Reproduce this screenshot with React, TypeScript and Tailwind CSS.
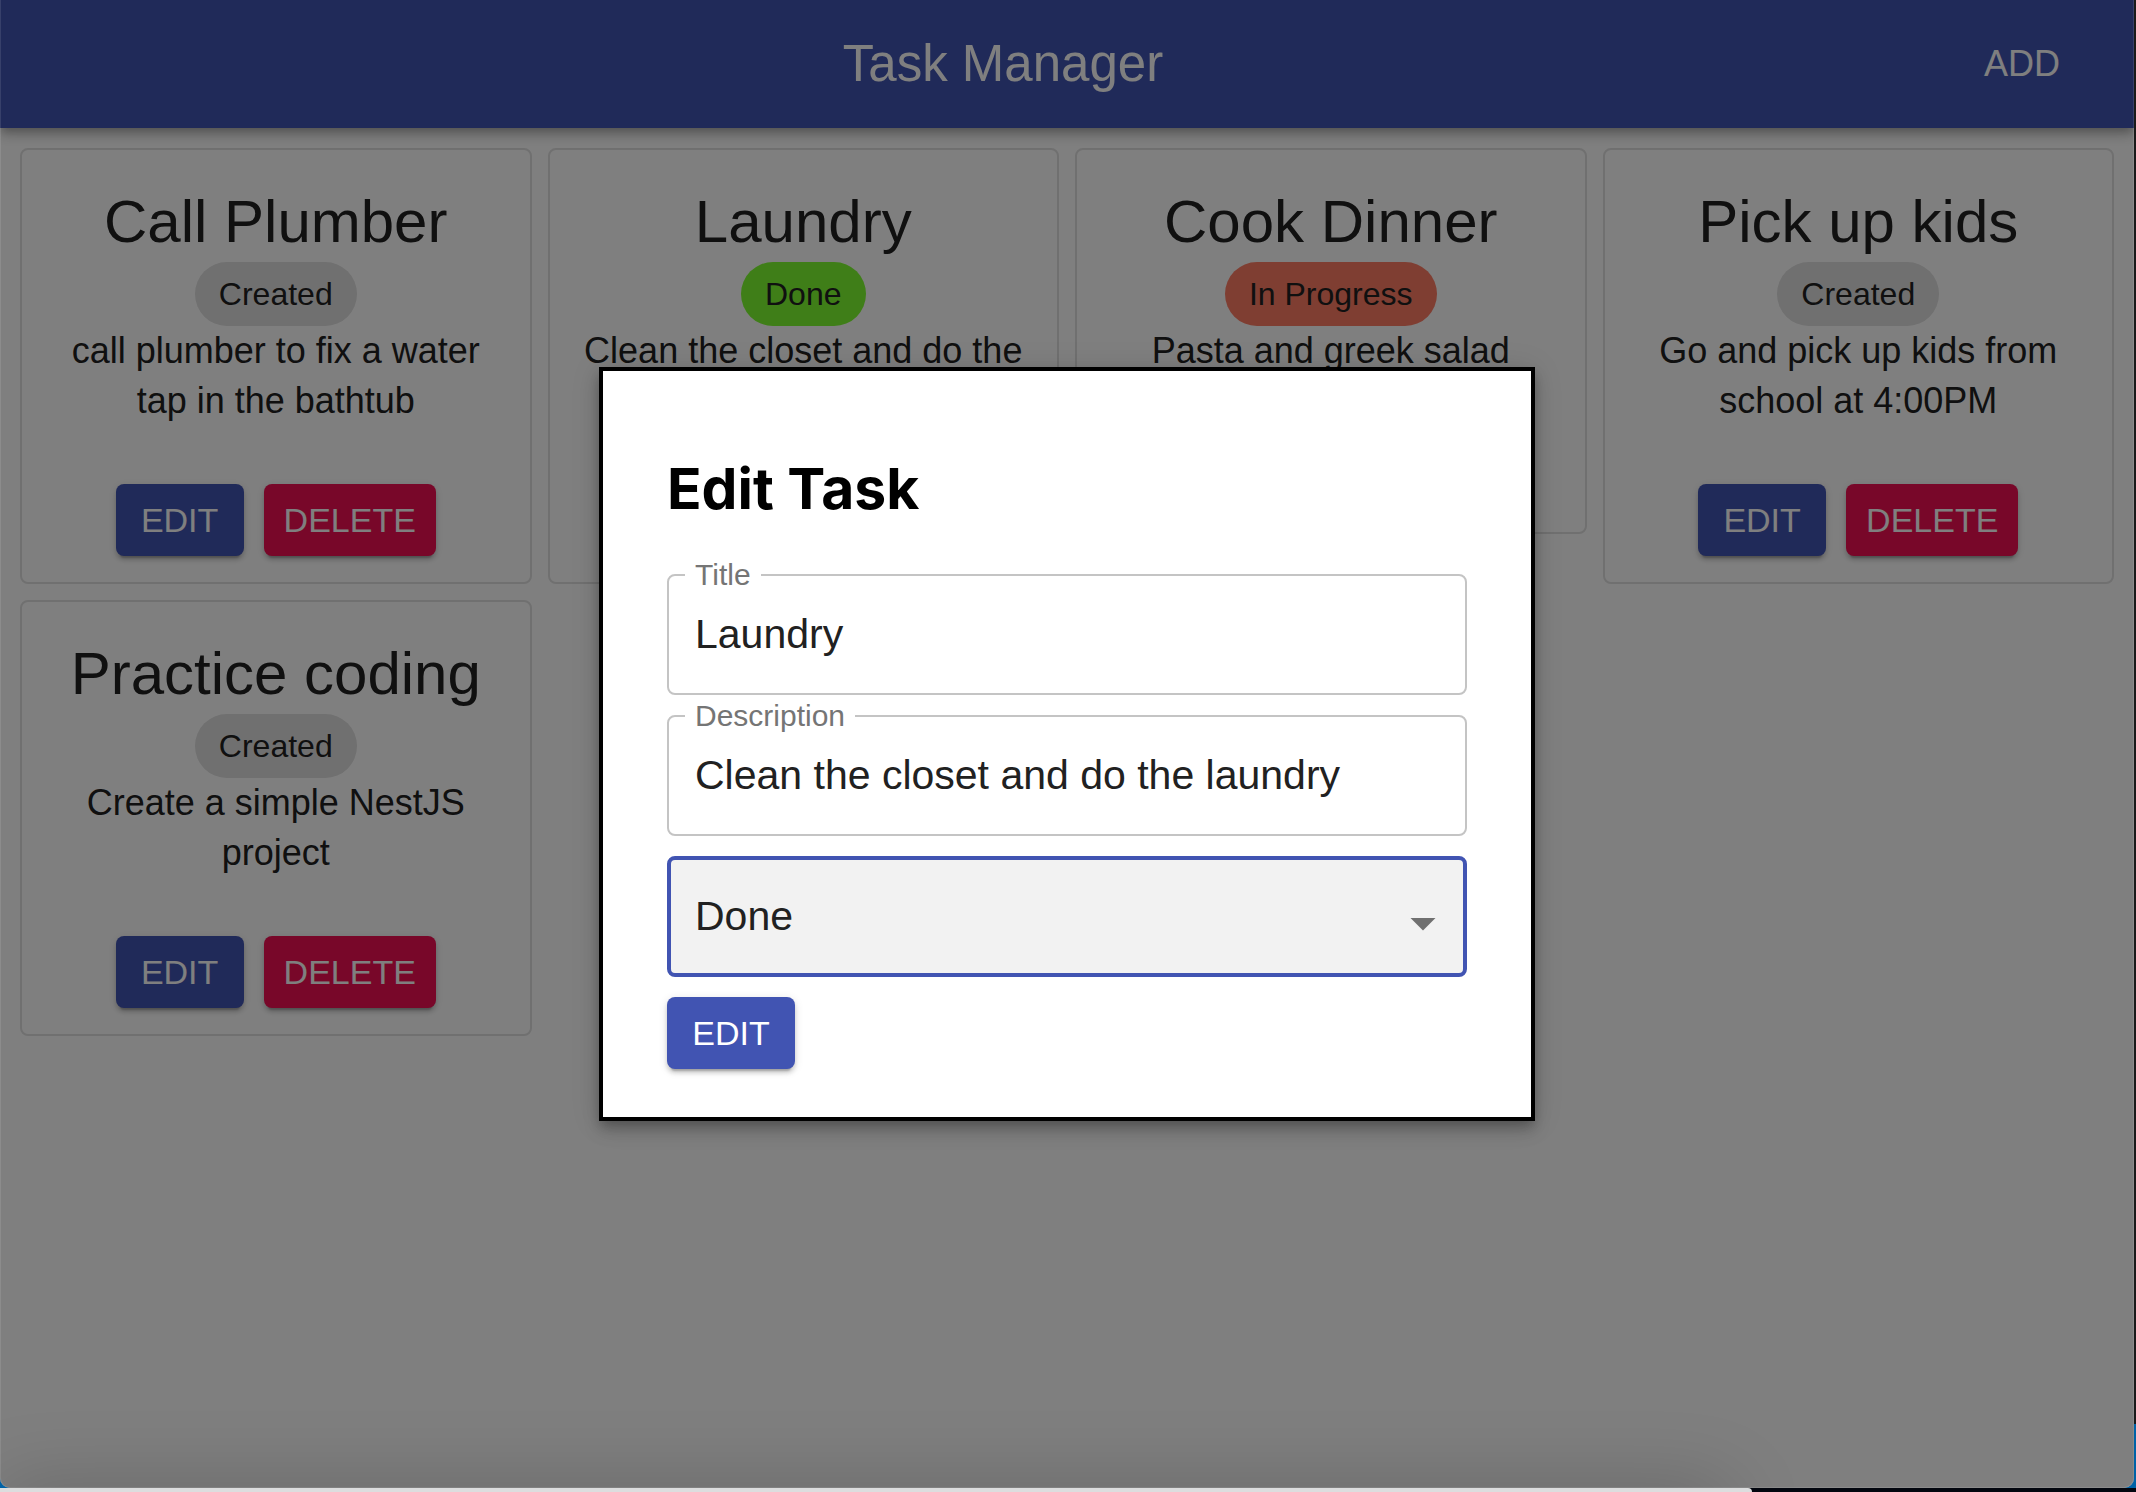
import { useState } from "react";

type Status = "Created" | "Done" | "In Progress";

interface Task {
  title: string;
  status: Status;
  description: string;
}

const tasks: Task[] = [
  { title: "Call Plumber", status: "Created", description: "call plumber to fix a water tap in the bathtub" },
  { title: "Laundry", status: "Done", description: "Clean the closet and do the laundry" },
  { title: "Cook Dinner", status: "In Progress", description: "Pasta and greek salad" },
  { title: "Pick up kids", status: "Created", description: "Go and pick up kids from school at 4:00PM" },
  { title: "Practice coding", status: "Created", description: "Create a simple NestJS project" },
];

const chipColor: Record<Status, string> = {
  Created: "bg-[#e0e0e0]",
  Done: "bg-[#7efc30]",
  "In Progress": "bg-[#fe7c64]",
};

const buttonBase =
  "h-[72px] min-w-[128px] rounded-lg px-5 text-[34px] leading-[56px] text-white shadow-[0_6px_2px_-4px_rgba(0,0,0,0.2),0_4px_4px_0_rgba(0,0,0,0.14),0_2px_10px_0_rgba(0,0,0,0.12)]";

function EditButton() {
  return (
    <button type="button" className={`${buttonBase} bg-[#4154b2]`}>
      EDIT
    </button>
  );
}

function DeleteButton() {
  return (
    <button type="button" className={`${buttonBase} bg-[#f00e52]`}>
      DELETE
    </button>
  );
}

function TaskCard({ task }: { task: Task }) {
  return (
    <article className="rounded-lg border-2 border-[#e0e0e0] text-center text-[#212121]">
      <div className="flex flex-col items-center p-8">
        <h2 className="text-[60px] leading-[80px]">{task.title}</h2>
        <span className={`h-16 rounded-full px-6 text-[32px] leading-[64px] ${chipColor[task.status]}`}>
          {task.status}
        </span>
        <p className="text-[36px] leading-[50px]">{task.description}</p>
      </div>
      <div className="flex justify-center gap-5 py-[26px]">
        <EditButton />
        <DeleteButton />
      </div>
    </article>
  );
}

function TextField({ id, label, initial }: { id: string; label: string; initial: string }) {
  const [value, setValue] = useState(initial);
  return (
    <fieldset className="-mt-[14px] min-w-0 rounded-lg border-2 border-[#c4c4c4]">
      <legend className="ml-4 px-[10px] text-[30px] leading-[30px] text-[#757575]">
        <label htmlFor={id}>{label}</label>
      </legend>
      <input
        id={id}
        value={value}
        onChange={(e) => setValue(e.target.value)}
        className="-mt-[14px] block h-[117px] w-full bg-transparent px-[26px] text-[41px] text-[#212121] outline-none"
      />
    </fieldset>
  );
}

function StatusSelect() {
  const [value, setValue] = useState<Status>("Done");
  return (
    <div className="relative">
      <select
        aria-label="Status"
        value={value}
        onChange={(e) => setValue(e.target.value as Status)}
        className="block h-[121px] w-full appearance-none rounded-lg border-4 border-[#4154b2] bg-[#f2f2f2] px-6 text-[41px] text-[#212121] outline-none"
      >
        <option>Created</option>
        <option>In Progress</option>
        <option>Done</option>
      </select>
      <svg
        viewBox="0 0 24 24"
        aria-hidden="true"
        className="pointer-events-none absolute top-[37px] right-[14px] size-[60px] fill-[#707070]"
      >
        <path d="M7 10l5 5 5-5z" />
      </svg>
    </div>
  );
}

function EditDialog() {
  return (
    <div className="absolute inset-0 flex items-center justify-center bg-black/50">
      <form
        role="dialog"
        aria-labelledby="edit-task-title"
        onSubmit={(e) => e.preventDefault()}
        className="w-full max-w-[936px] border-4 border-black bg-white px-16 pt-8 pb-12 shadow-[0_6px_10px_-2px_rgba(0,0,0,0.2),0_10px_16px_0_rgba(0,0,0,0.14),0_2px_28px_0_rgba(0,0,0,0.12)]"
      >
        <h2 id="edit-task-title" className="py-[50px] font-['Inter'] text-[57px] leading-[71px] font-bold text-black">
          Edit Task
        </h2>
        <div className="flex flex-col gap-5">
          <TextField id="task-title" label="Title" initial="Laundry" />
          <TextField id="task-description" label="Description" initial="Clean the closet and do the laundry" />
          <StatusSelect />
          <div className="flex">
            <EditButton />
          </div>
        </div>
      </form>
    </div>
  );
}

export default function App() {
  return (
    <div className="flex min-h-screen flex-col bg-[#03060f] font-['Liberation_Sans',Arial,sans-serif]">
      <div className="flex flex-1 bg-[linear-gradient(to_top,#0062a6_64px,#1a1a1a_64px)]">
        <div className="relative flex-1 overflow-hidden rounded-b-[10px] bg-white">
          <header className="relative flex h-32 items-center bg-[#4154b2] px-12 text-white shadow-[0_4px_8px_-2px_rgba(0,0,0,0.2),0_8px_10px_0_rgba(0,0,0,0.14),0_2px_20px_0_rgba(0,0,0,0.12)]">
            <h1 className="flex-1 text-center text-[51px] leading-[80px]">Task Manager</h1>
            <button type="button" className="min-w-[128px] px-4 py-3 text-[36px] leading-[60px]">
              ADD
            </button>
          </header>
          <main className="grid grid-cols-4 items-start gap-4 p-5">
            {tasks.map((task) => (
              <TaskCard key={task.title} task={task} />
            ))}
          </main>
          <EditDialog />
          <div className="pointer-events-none absolute top-full left-0 h-16 w-[81%] shadow-[0_0_80px_rgba(0,0,0,0.2)]" />
          <div className="pointer-events-none absolute inset-0 rounded-b-[10px] border-x border-b border-white/10" />
        </div>
        <div className="w-[2px]" />
      </div>
      <div className="h-1">
        <div className="h-full w-[82%] rounded-tr-[6px] bg-[#dcddde]" />
      </div>
    </div>
  );
}
